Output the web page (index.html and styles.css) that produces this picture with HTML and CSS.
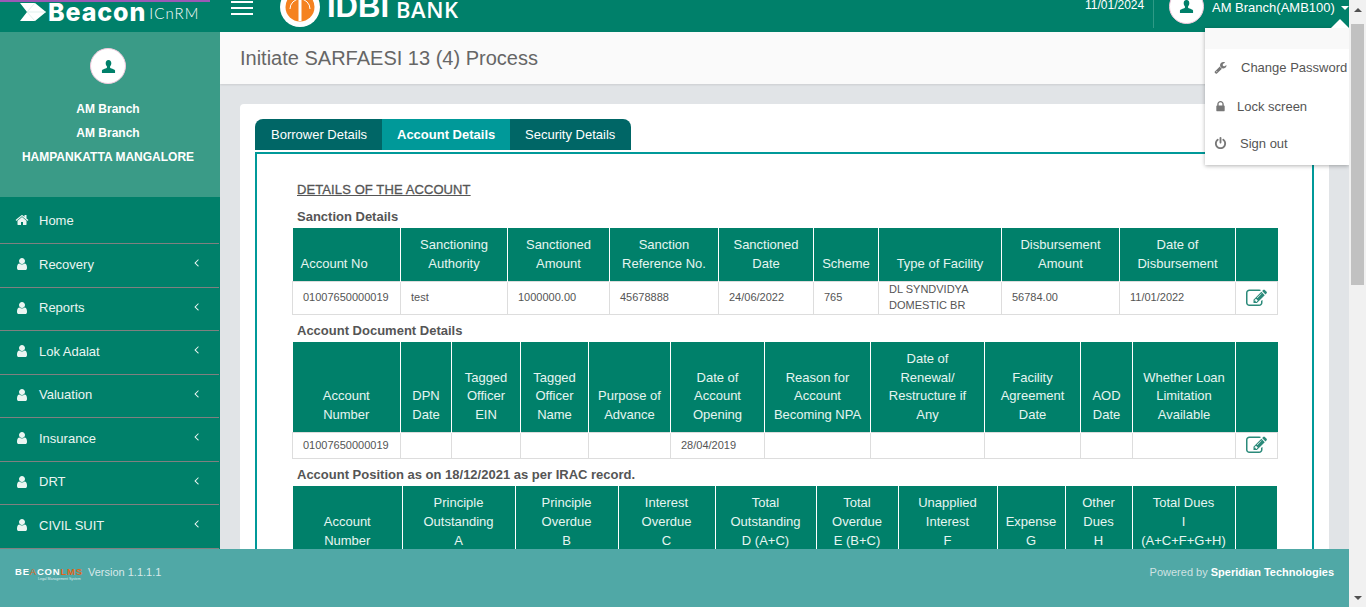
FILE: index.html
```html
<!DOCTYPE html>
<html>
<head>
	<meta charset="utf-8">
	<title>Initiate SARFAESI 13 (4) Process</title>
	<link rel="stylesheet" href="styles.css">
</head>
<body>
	<svg class="defs" xmlns="http://www.w3.org/2000/svg">
		<symbol id="i-bust" viewBox="0 0 16 16"><path d="M8 1c2 0 3 1.5 3 3.5 0 1.3-.6 2.6-1.3 3.3v1.4c0 .5 4.8 1.5 5.3 3V15H1v-2.8c.5-1.5 5.3-2.5 5.3-3V7.8C5.6 7.1 5 5.8 5 4.5 5 2.5 6 1 8 1z"/></symbol>
		<symbol id="i-user" viewBox="0 0 1792 1792"><path d="M1536 1399q0 109-62.5 187t-150.5 78h-854q-88 0-150.5-78t-62.5-187q0-85 8.5-160.5t31.5-152 58.5-131 94-89 134.5-34.5q131 128 313 128t313-128q76 0 134.5 34.5t94 89 58.5 131 31.5 152 8.5 160.5zm-256-887q0 159-112.5 271.5t-271.5 112.5-271.5-112.5-112.5-271.5 112.5-271.5 271.5-112.5 271.5 112.5 112.5 271.5z"/></symbol>
		<symbol id="i-home" viewBox="0 0 1792 1792"><path d="M1472 992v480q0 26-19 45t-45 19h-384v-384h-256v384h-384q-26 0-45-19t-19-45v-480q0-1 .5-3t.5-3l575-474 575 474q1 2 1 6zm223-69l-62 74q-8 9-21 11h-3q-13 0-21-7l-692-577-692 577q-12 8-24 7-13-2-21-11l-62-74q-8-10-7-23.5t11-21.5l719-599q32-26 76-26t76 26l244 204v-195q0-14 9-23t23-9h192q14 0 23 9t9 23v408l219 182q10 8 11 21.5t-7 23.5z"/></symbol>
		<symbol id="i-left" viewBox="0 0 1792 1792"><path d="M1203 544q0 13-10 23l-393 393 393 393q10 10 10 23t-10 23l-50 50q-10 10-23 10t-23-10l-466-466q-10-10-10-23t10-23l466-466q10-10 23-10t23 10l50 50q10 10 10 23z"/></symbol>
		<symbol id="i-lock" viewBox="0 0 1792 1792"><path d="M640 768h512v-192q0-106-75-181t-181-75-181 75-75 181v192zm832 96v576q0 40-28 68t-68 28h-960q-40 0-68-28t-28-68v-576q0-40 28-68t68-28h32v-192q0-184 132-316t316-132 316 132 132 316v192h32q40 0 68 28t28 68z"/></symbol>
		<symbol id="i-power" viewBox="0 0 1792 1792"><path d="M1664 896q0 156-61 298t-164 245-245 164-298 61-298-61-245-164-164-245-61-298q0-182 80.5-343t226.5-270q43-32 95.5-25t83.5 50q32 42 24.5 94.5t-49.5 84.5q-98 74-151.5 181t-53.5 228q0 104 40.5 198.5t109.5 163.5 163.5 109.5 198.5 40.5 198.5-40.5 163.5-109.5 109.5-163.5 40.5-198.5q0-121-53.5-228t-151.5-181q-42-32-49.5-84.5t24.5-94.5q31-43 84-50t95 25q146 109 226.5 270t80.5 343zm-640-768v640q0 52-38 90t-90 38-90-38-38-90v-640q0-52 38-90t90-38 90 38 38 90z"/></symbol>
		<symbol id="i-wrench" viewBox="0 0 1792 1792"><path d="M448 1472q0-26-19-45t-45-19-45 19-19 45 19 45 45 19 45-19 19-45zm644-420l-682 682q-37 37-90 37-52 0-91-37l-106-108q-38-36-38-90 0-53 38-91l681-681q39 98 114.5 173.5t173.5 114.5zm634-435q0 39-23 106-47 134-164.5 217.5t-258.5 83.5q-185 0-316.5-131.5t-131.5-316.5 131.5-316.5 316.5-131.5q58 0 121.5 16.5t107.5 46.5q16 11 16 28t-16 28l-293 169v224l193 107q5-3 79-48.5t135.5-81 70.5-35.5q15 0 23.5 10t8.5 25z"/></symbol>
		<symbol id="i-edit" viewBox="0 0 1792 1792"><path d="M888 1184l116-116-152-152-116 116v56h96v96h56zm440-720q-16-16-33 1l-350 350q-17 17-1 33t33-1l350-350q17-17 1-33zm80 594v190q0 119-84.5 203.5t-203.5 84.5h-832q-119 0-203.5-84.5t-84.5-203.5v-832q0-119 84.5-203.5t203.5-84.5h832q63 0 117 25 15 7 18 23 3 17-9 29l-49 49q-14 14-32 8-23-6-45-6h-832q-66 0-113 47t-47 113v832q0 66 47 113t113 47h832q66 0 113-47t47-113v-126q0-13 9-22l64-64q15-15 35-6t20 29zm-96-738l288 288-672 672h-288v-288zm444 132l-92 92-288-288 92-92q28-28 68-28t68 28l152 152q28 28 28 68t-28 68z"/></symbol>
	</svg>

	<div class="page">
		<div class="shell">
			<header class="topbar">
				<div class="brand">
					<svg class="brand-mark" viewBox="0 0 26 18"><path d="M0 0h15l11 9-11 9H0l7-9z" fill="#fff"/><path d="M7 9l8-9M7 9h19M7 9l8 9" stroke="#cfe6e0" stroke-width=".6" fill="none"/></svg>
					<span class="brand-name">Beacon</span>
					<span class="brand-sub">ICnRM</span>
				</div>
				<div class="burger"><span></span><span></span><span></span></div>
				<div class="bank">
					<svg class="bank-mark" viewBox="0 0 40 40"><circle cx="20" cy="20" r="20" fill="#fff"/><circle cx="20" cy="20" r="14.5" fill="#f58220"/><path d="M10 22a10 10 0 0 1 20 0" fill="none" stroke="#fff"/><path d="M18.5 8h3v26h-3z" fill="#fff"/></svg>
					<span class="bank-idbi">IDBI</span>
					<span class="bank-name">BANK</span>
				</div>
				<div class="top-right">
					<span class="top-date">11/01/2024</span>
					<div class="top-user">
						<span class="avatar avatar-top"><svg class="ico"><use href="#i-bust"/></svg></span>
						<span class="top-user-name">AM Branch(AMB100)</span>
						<span class="caret"></span>
					</div>
				</div>
			</header>

			<div class="middle">
				<aside class="sidebar">
					<div class="profile">
						<span class="avatar avatar-side"><svg class="ico"><use href="#i-bust"/></svg></span>
						<p>AM Branch</p>
						<p>AM Branch</p>
						<p>HAMPANKATTA MANGALORE</p>
					</div>
					<ul class="menu">
						<li class="menu-home"><svg class="ico"><use href="#i-home"/></svg><span>Home</span></li>
						<li><svg class="ico"><use href="#i-user"/></svg><span>Recovery</span><svg class="ico arrow"><use href="#i-left"/></svg></li>
						<li><svg class="ico"><use href="#i-user"/></svg><span>Reports</span><svg class="ico arrow"><use href="#i-left"/></svg></li>
						<li><svg class="ico"><use href="#i-user"/></svg><span>Lok Adalat</span><svg class="ico arrow"><use href="#i-left"/></svg></li>
						<li><svg class="ico"><use href="#i-user"/></svg><span>Valuation</span><svg class="ico arrow"><use href="#i-left"/></svg></li>
						<li><svg class="ico"><use href="#i-user"/></svg><span>Insurance</span><svg class="ico arrow"><use href="#i-left"/></svg></li>
						<li><svg class="ico"><use href="#i-user"/></svg><span>DRT</span><svg class="ico arrow"><use href="#i-left"/></svg></li>
						<li><svg class="ico"><use href="#i-user"/></svg><span>CIVIL SUIT</span><svg class="ico arrow"><use href="#i-left"/></svg></li>
					</ul>
				</aside>

				<main class="main">
					<div class="title-bar"><h1>Initiate SARFAESI 13 (4) Process</h1></div>
					<div class="card">
						<div class="tabs">
							<a class="tab tab-borrower">Borrower Details</a>
							<a class="tab tab-account active">Account Details</a>
							<a class="tab tab-security">Security Details</a>
						</div>
						<div class="pane">
							<h3 class="section-head">DETAILS OF THE ACCOUNT</h3>

							<h4 class="sub-head">Sanction Details</h4>
							<table class="grid grid-sanction">
								<colgroup><col><col><col><col><col><col><col><col><col><col></colgroup>
								<thead>
									<tr>
										<th class="left">Account No</th>
										<th>Sanctioning Authority</th>
										<th>Sanctioned Amount</th>
										<th>Sanction Reference No.</th>
										<th>Sanctioned Date</th>
										<th>Scheme</th>
										<th>Type of Facility</th>
										<th>Disbursement Amount</th>
										<th>Date of Disbursement</th>
										<th></th>
									</tr>
								</thead>
								<tbody>
									<tr>
										<td>01007650000019</td>
										<td>test</td>
										<td>1000000.00</td>
										<td>45678888</td>
										<td>24/06/2022</td>
										<td>765</td>
										<td>DL SYNDVIDYA DOMESTIC BR</td>
										<td>56784.00</td>
										<td>11/01/2022</td>
										<td class="edit"><svg class="ico"><use href="#i-edit"/></svg></td>
									</tr>
								</tbody>
							</table>

							<h4 class="sub-head">Account Document Details</h4>
							<table class="grid grid-document">
								<colgroup><col><col><col><col><col><col><col><col><col><col><col><col></colgroup>
								<thead>
									<tr>
										<th>Account Number</th>
										<th>DPN Date</th>
										<th>Tagged Officer EIN</th>
										<th>Tagged Officer Name</th>
										<th>Purpose of Advance</th>
										<th>Date of Account Opening</th>
										<th>Reason for Account Becoming NPA</th>
										<th>Date of Renewal/ Restructure if Any</th>
										<th>Facility Agreement Date</th>
										<th>AOD Date</th>
										<th>Whether Loan Limitation Available</th>
										<th></th>
									</tr>
								</thead>
								<tbody>
									<tr>
										<td>01007650000019</td>
										<td></td>
										<td></td>
										<td></td>
										<td></td>
										<td>28/04/2019</td>
										<td></td>
										<td></td>
										<td></td>
										<td></td>
										<td></td>
										<td class="edit"><svg class="ico"><use href="#i-edit"/></svg></td>
									</tr>
								</tbody>
							</table>

							<h4 class="sub-head">Account Position as on 18/12/2021 as per IRAC record.</h4>
							<table class="grid grid-position">
								<colgroup><col><col><col><col><col><col><col><col><col><col><col></colgroup>
								<thead>
									<tr>
										<th>Account Number</th>
										<th>Principle Outstanding<br>A</th>
										<th>Principle Overdue<br>B</th>
										<th>Interest Overdue<br>C</th>
										<th>Total Outstanding<br>D (A+C)</th>
										<th>Total Overdue<br>E (B+C)</th>
										<th>Unapplied Interest<br>F</th>
										<th>Expense<br>G</th>
										<th>Other Dues<br>H</th>
										<th>Total Dues<br>I<br>(A+C+F+G+H)</th>
										<th></th>
									</tr>
								</thead>
							</table>
						</div>
					</div>
				</main>
			</div>

			<footer class="footer">
				<div class="footer-left">
					<div class="lms-logo">
						<span class="lms-name">BE<i>A</i>CON<b>LMS</b></span>
						<span class="lms-tag">Legal Management System</span>
					</div>
					<span class="version">Version 1.1.1.1</span>
				</div>
				<div class="footer-right">Powered by <b>Speridian Technologies</b></div>
			</footer>

			<div class="user-menu">
				<div class="user-menu-head"></div>
				<a class="item-password"><svg class="ico"><use href="#i-wrench"/></svg>Change Password</a>
				<a class="item-lock"><svg class="ico"><use href="#i-lock"/></svg>Lock screen</a>
				<a class="item-signout"><svg class="ico"><use href="#i-power"/></svg>Sign out</a>
			</div>
		</div>

		<div class="scrollbar">
			<span class="scroll-up"></span>
			<span class="scroll-thumb"></span>
			<span class="scroll-down"></span>
		</div>
	</div>
</body>
</html>
```

FILE: styles.css
```css
* {
	box-sizing: border-box;
}

html, body {
	height: 100%;
	margin: 0;
	padding: 0;
	overflow: hidden;
}

body {
	font-family: "Liberation Sans", Arial, sans-serif;
	font-size: 13px;
	color: #555;
	background: #e1e4e7;
}

.defs {
	display: none;
}

.ico {
	display: block;
	width: 14px;
	height: 14px;
	fill: currentColor;
}

.page {
	display: flex;
	height: 607px;
}

.shell {
	position: relative;
	display: flex;
	flex-direction: column;
	flex: 1;
	min-width: 0;
}

/* top bar */
.topbar {
	position: relative;
	display: flex;
	flex: none;
	height: 32px;
	background: #00806a;
	color: #fff;
	overflow: hidden;
}

.topbar:before {
	content: "";
	position: absolute;
	left: 0;
	top: 0;
	width: 210px;
	height: 2px;
	background: #9b59b6;
}

.brand {
	display: flex;
	align-items: flex-start;
	width: 220px;
	flex: none;
	padding: 3px 0 0 20px;
}

.brand-mark {
	width: 26px;
	height: 18px;
	flex: none;
}

.brand-name {
	font-family: Inter, sans-serif;
	font-weight: 800;
	font-size: 25px;
	line-height: 18px;
	margin-left: 2px;
	letter-spacing: 0.9px;
}

.brand-sub {
	font-family: Lato, sans-serif;
	font-weight: 300;
	font-size: 15px;
	line-height: 18px;
	margin: 1px 0 0 3px;
	letter-spacing: 1.1px;
}

.burger {
	flex: none;
	width: 22px;
	margin: 1px 0 0 11px;
}

.burger span {
	display: block;
	height: 2px;
	margin-bottom: 4px;
	background: #fff;
}

.bank {
	display: flex;
	align-items: flex-start;
	margin-left: 27px;
	height: 32px;
}

.bank-mark {
	width: 40px;
	height: 40px;
	margin-top: -13px;
	flex: none;
}

.bank-idbi {
	font-weight: 700;
	font-size: 31px;
	line-height: 24px;
	margin-left: 7px;
	margin-top: -5px;
}

.bank-name {
	font-family: "Open Sans", sans-serif;
	font-weight: 600;
	font-size: 22px;
	line-height: 24px;
	letter-spacing: 0.6px;
	margin-left: 7px;
	margin-top: -3px;
}

.top-right {
	display: flex;
	margin-left: auto;
	height: 28px;
}

.top-date {
	font-size: 12px;
	line-height: 12px;
	margin-top: -1px;
	padding-right: 10px;
	width: 69px;
	border-right: 1px solid #2f9a86;
}

.top-user {
	display: flex;
	align-items: flex-start;
	padding-left: 15px;
	width: 195px;
}

.top-user-name {
	font-size: 13px;
	line-height: 15px;
	margin-left: 8px;
}

.caret {
	width: 0;
	height: 0;
	margin: 6px 0 0 6px;
	border-left: 4px solid transparent;
	border-right: 4px solid transparent;
	border-top: 4px solid #fff;
}

.avatar {
	display: flex;
	align-items: center;
	justify-content: center;
	border-radius: 50%;
	background: #fff;
	border: 1px solid #f0c8dc;
	color: #00806a;
	flex: none;
}

.avatar-top {
	width: 35px;
	height: 35px;
	margin-top: -11px;
}

.avatar-top .ico {
	width: 15px;
	height: 15px;
}

.avatar-side {
	width: 36px;
	height: 36px;
	margin: 0 auto 13px;
}

.avatar-side .ico {
	width: 15px;
	height: 15px;
}

/* sidebar */
.middle {
	display: flex;
	flex: 1;
	min-height: 0;
}

.sidebar {
	flex: none;
	width: 220px;
	background: #00806a;
	overflow: hidden;
}

.profile {
	height: 165px;
	padding: 16px 4px 0 0;
	background: #3a9b87;
	color: #fff;
	text-align: center;
	font-size: 12px;
	font-weight: 700;
}

.profile p {
	margin: 0;
	line-height: 24px;
}

.menu {
	list-style: none;
	margin: 0;
	padding: 0;
}

.menu li {
	display: flex;
	align-items: center;
	height: 43.5px;
	padding: 0 0 2px 15px;
	color: #ebf5f2;
	font-size: 13px;
	border-bottom: 1px solid #808080;
	margin-right: 1px;
}

.menu .menu-home {
	height: 47px;
	padding-bottom: 0;
}

.menu span {
	margin-left: 10px;
}

.menu .arrow {
	margin: -3px 16px 0 auto;
	width: 13px;
	height: 13px;
}

/* main */
.main {
	flex: 1;
	min-width: 0;
	overflow: hidden;
}

.title-bar {
	height: 52px;
	padding: 0 20px;
	background: #fafafa;
	box-shadow: 0 1px 2px rgba(0, 0, 0, .1);
}

.title-bar h1 {
	margin: 0;
	font-size: 20px;
	font-weight: 400;
	line-height: 52px;
	color: #666;
}

.card {
	margin: 20px 20px 0;
	padding: 15px;
	background: #fff;
	border-radius: 4px 4px 0 0;
}

.tabs {
	display: flex;
	height: 31px;
	margin-bottom: 2px;
}

.tab {
	padding: 0 16px;
	background: #006666;
	color: #fff;
	line-height: 31px;
	font-size: 13px;
	white-space: nowrap;
}

.tab.active {
	padding: 0 15px;
	background: #009999;
	font-weight: 700;
}

.tab-borrower {
	width: 127px;
	border-top-left-radius: 8px;
}

.tab-account {
	width: 128px;
}

.tab-security {
	width: 121px;
	padding: 0 15px;
	border-top-right-radius: 8px;
}

.pane {
	padding: 28px 36px 0;
	border: 2px solid #009999;
	background: #fff;
}

.section-head {
	margin: 0 0 10px 4px;
	font-size: 13px;
	font-weight: 400;
	line-height: 16px;
	letter-spacing: 0.1px;
	-webkit-text-stroke: 0.3px #555;
	text-decoration: underline;
	color: #555;
}

.sub-head {
	margin: 0;
	padding-left: 4px;
	height: 20px;
	font-size: 13px;
	font-weight: 700;
	line-height: 17px;
	color: #555;
}

.grid {
	width: 984px;
	table-layout: fixed;
	border-collapse: collapse;
	margin-bottom: 7px;
}

.grid-sanction,
.grid-document {
	width: 985px;
	margin-left: -1px;
}

.grid th {
	padding: 8px;
	background: #00806a;
	color: #e6f5f1;
	font-size: 13px;
	font-weight: 400;
	line-height: 1.42857;
	text-align: center;
	vertical-align: bottom;
	border-right: 1px solid #fff;
}

.grid th:last-child {
	border-right: 0;
}

.grid th.left {
	text-align: left;
}

.grid td {
	padding: 0 10px 1px;
	border: 1px solid #ddd;
	font-size: 11px;
	line-height: 15.5px;
	color: #555;
}

.grid td.edit {
	padding: 2px 10px;
	color: #2b8a7a;
}

.grid td.edit .ico {
	width: 21px;
	height: 21px;
}

.grid-sanction col:nth-child(1) { width: 108px; }
.grid-sanction col:nth-child(2) { width: 107px; }
.grid-sanction col:nth-child(3) { width: 102px; }
.grid-sanction col:nth-child(4) { width: 109px; }
.grid-sanction col:nth-child(5) { width: 95px; }
.grid-sanction col:nth-child(6) { width: 65px; }
.grid-sanction col:nth-child(7) { width: 123px; }
.grid-sanction col:nth-child(8) { width: 118px; }
.grid-sanction col:nth-child(9) { width: 116px; }
.grid-sanction col:nth-child(10) { width: 42px; }

.grid-document col:nth-child(1) { width: 108px; }
.grid-document col:nth-child(2) { width: 51px; }
.grid-document col:nth-child(3) { width: 69px; }
.grid-document col:nth-child(4) { width: 68px; }
.grid-document col:nth-child(5) { width: 82px; }
.grid-document col:nth-child(6) { width: 94px; }
.grid-document col:nth-child(7) { width: 106px; }
.grid-document col:nth-child(8) { width: 114px; }
.grid-document col:nth-child(9) { width: 96px; }
.grid-document col:nth-child(10) { width: 52px; }
.grid-document col:nth-child(11) { width: 103px; }
.grid-document col:nth-child(12) { width: 42px; }

.grid-position col:nth-child(1) { width: 109px; }
.grid-position col:nth-child(2) { width: 113px; }
.grid-position col:nth-child(3) { width: 103px; }
.grid-position col:nth-child(4) { width: 97px; }
.grid-position col:nth-child(5) { width: 101px; }
.grid-position col:nth-child(6) { width: 82px; }
.grid-position col:nth-child(7) { width: 99px; }
.grid-position col:nth-child(8) { width: 68px; }
.grid-position col:nth-child(9) { width: 67px; }
.grid-position col:nth-child(10) { width: 103px; }
.grid-position col:nth-child(11) { width: 42px; }

/* footer */
.footer {
	display: flex;
	flex: none;
	justify-content: space-between;
	height: 58px;
	padding: 15px 15px 0;
	background: #50a8a6;
	font-size: 11px;
	color: #dfeeee;
}

.footer-left {
	display: flex;
	align-items: flex-start;
}

.lms-logo {
	display: flex;
	flex-direction: column;
	width: 73px;
	padding-top: 2px;
}

.lms-name {
	font-size: 9.5px;
	font-weight: 700;
	line-height: 11px;
	letter-spacing: 0.8px;
	color: #fff;
	white-space: nowrap;
}

.lms-name i {
	font-style: normal;
	font-weight: 400;
	color: #e0661c;
}

.lms-name b {
	color: #e0661c;
}

.lms-tag {
	font-size: 3.5px;
	line-height: 5px;
	padding-left: 23px;
	white-space: nowrap;
}

.version {
	font-size: 11px;
	line-height: 16px;
	color: #d8e8ea;
}

.footer-right {
	font-size: 11px;
	line-height: 16px;
	color: #cfe2e2;
}

.footer-right b {
	color: #fff;
}

/* user dropdown */
.user-menu {
	position: absolute;
	top: 28px;
	right: 0;
	width: 144px;
	height: 137px;
	background: #fff;
	box-shadow: 0 1px 4px rgba(0, 0, 0, .3);
	color: #555;
	font-size: 13px;
}

.user-menu:before {
	content: "";
	position: absolute;
	top: -9px;
	right: 0;
	border-left: 9px solid transparent;
	border-right: 9px solid transparent;
	border-bottom: 9px solid #fff;
}

.user-menu-head {
	height: 21px;
	background: #f9f9f9;
}

.user-menu a {
	display: flex;
	align-items: center;
	height: 38px;
	padding: 0 0 2px 9px;
	white-space: nowrap;
}

.user-menu .item-lock {
	height: 39px;
	padding-bottom: 0;
}

.user-menu .item-signout {
	padding-bottom: 3px;
}

.user-menu .ico {
	width: 13px;
	height: 13px;
	color: #777;
}

.item-password .ico { margin-right: 14px; }
.item-lock .ico { margin-right: 10px; }
.item-signout .ico { margin-right: 13px; }

/* fake window scrollbar */
.scrollbar {
	position: relative;
	flex: none;
	width: 17px;
	background: #f1f1f1;
}

.scroll-thumb {
	position: absolute;
	left: 2px;
	top: 24px;
	width: 13px;
	height: 261px;
	background: #c1c1c1;
}

.scroll-up,
.scroll-down {
	position: absolute;
	left: 5px;
	border-left: 4px solid transparent;
	border-right: 4px solid transparent;
}

.scroll-up {
	top: 8px;
	border-bottom: 4px solid #505050;
}

.scroll-down {
	bottom: 7px;
	border-top: 4px solid #505050;
}
```
